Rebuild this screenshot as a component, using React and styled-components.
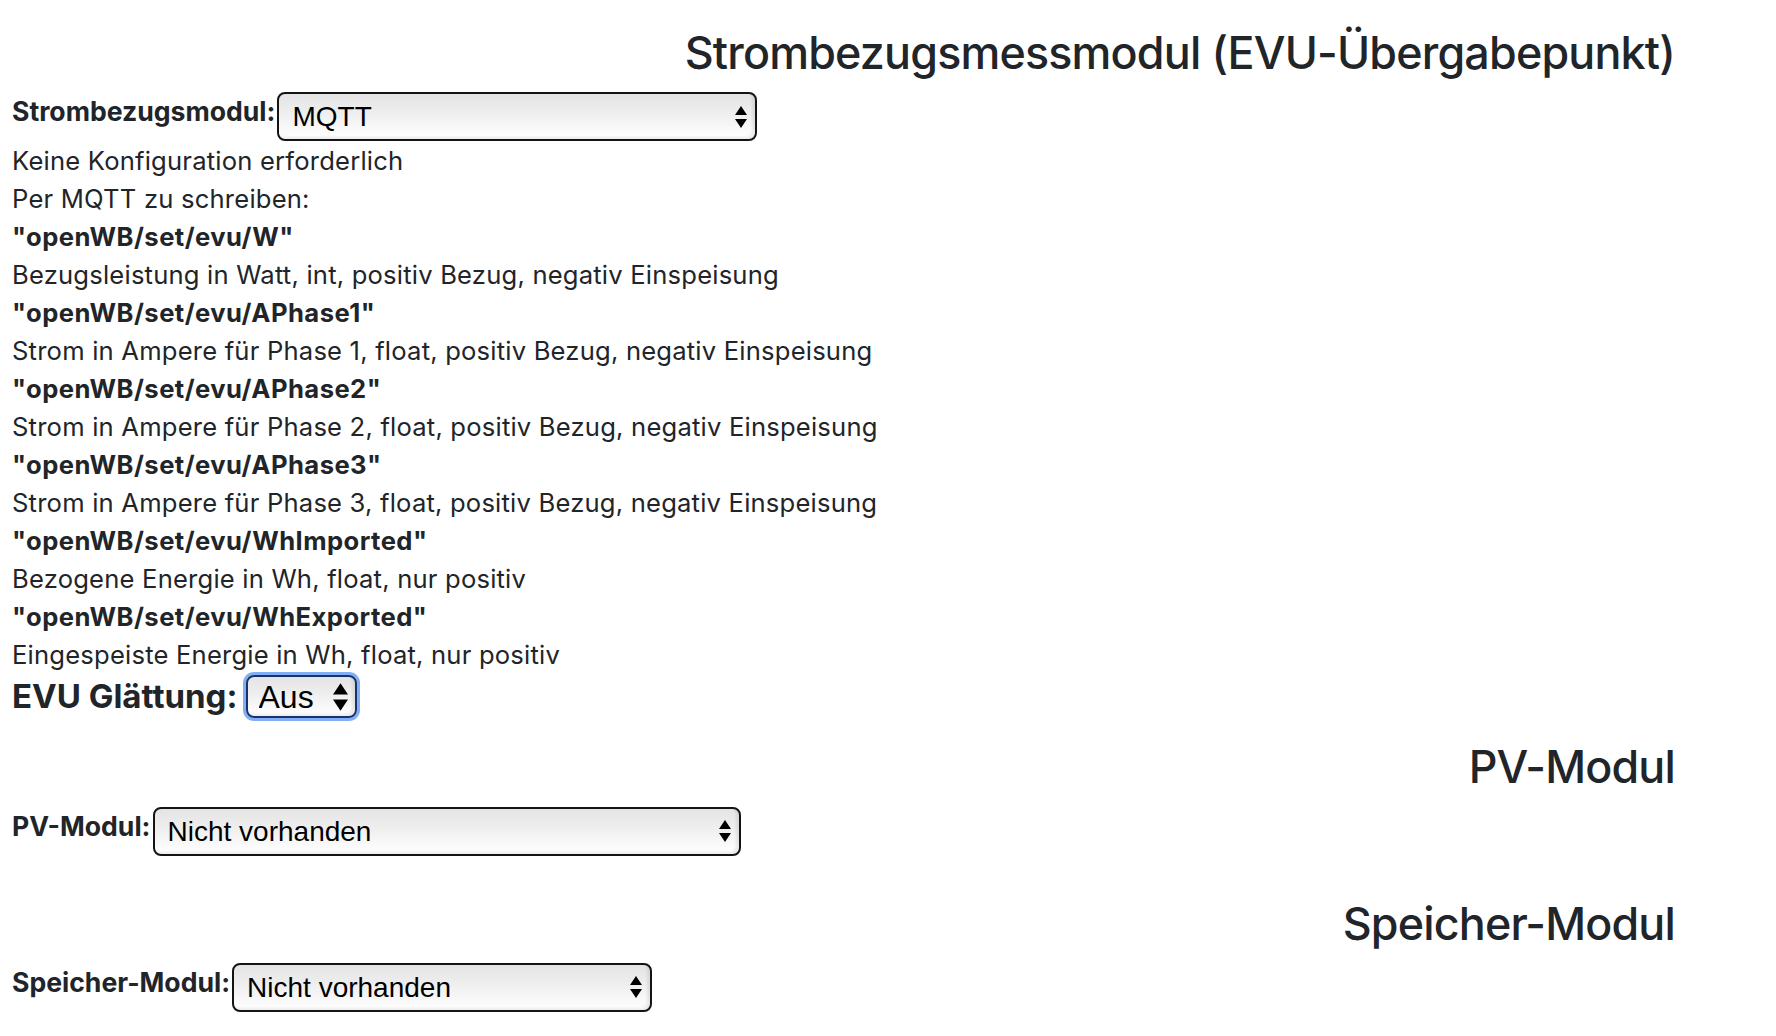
import styled, { createGlobalStyle } from 'styled-components';

const GlobalStyle = createGlobalStyle`
  html, body {
    margin: 0;
    padding: 0;
    background: #fff;
  }
  body {
    font-family: 'Inter', 'Helvetica Neue', Arial, sans-serif;
    color: #212529;
  }
`;

const topics = [
  ['"openWB/set/evu/W"', 'Bezugsleistung in Watt, int, positiv Bezug, negativ Einspeisung'],
  ['"openWB/set/evu/APhase1"', 'Strom in Ampere für Phase 1, float, positiv Bezug, negativ Einspeisung'],
  ['"openWB/set/evu/APhase2"', 'Strom in Ampere für Phase 2, float, positiv Bezug, negativ Einspeisung'],
  ['"openWB/set/evu/APhase3"', 'Strom in Ampere für Phase 3, float, positiv Bezug, negativ Einspeisung'],
  ['"openWB/set/evu/WhImported"', 'Bezogene Energie in Wh, float, nur positiv'],
  ['"openWB/set/evu/WhExported"', 'Eingespeiste Energie in Wh, float, nur positiv'],
];

const Arrows = ({ big }) => (
  <ArrowIcon $big={big} viewBox='0 0 12 22' aria-hidden='true'>
    <polygon points='0,9 6,0 12,9' />
    <polygon points='0,13 12,13 6,22' />
  </ArrowIcon>
);

const Dropdown = ({ value, options, width, big, focused }) => (
  <SelectWrap>
    <Select defaultValue={value} $width={width} $big={big} $focused={focused}>
      {options.map((o) => (
        <option key={o}>{o}</option>
      ))}
    </Select>
    <Arrows big={big} />
  </SelectWrap>
);

const App = () => {
  return (
    <Page>
      <GlobalStyle />
      <Section>
        <Heading>Strombezugsmessmodul (EVU-Übergabepunkt)</Heading>
        <FieldRow>
          <Label>Strombezugsmodul:</Label>
          <Dropdown value='MQTT' options={['MQTT', 'Nicht vorhanden']} width={480} />
        </FieldRow>
        <Info>
          <Line>Keine Konfiguration erforderlich</Line>
          <Line>Per MQTT zu schreiben:</Line>
          {topics.map(([topic, desc]) => (
            <div key={topic}>
              <Line $bold>{topic}</Line>
              <Line>{desc}</Line>
            </div>
          ))}
        </Info>
        <SmoothRow>
          <BigLabel>EVU Glättung:</BigLabel>
          <Dropdown value='Aus' options={['Aus', 'An']} big focused />
        </SmoothRow>
      </Section>

      <Section $after={41}>
        <Heading>PV-Modul</Heading>
        <FieldRow>
          <Label>PV-Modul:</Label>
          <Dropdown value='Nicht vorhanden' options={['Nicht vorhanden', 'MQTT']} width={588} />
        </FieldRow>
      </Section>

      <Section>
        <Heading>Speicher-Modul</Heading>
        <FieldRow>
          <Label>Speicher-Modul:</Label>
          <Dropdown value='Nicht vorhanden' options={['Nicht vorhanden', 'MQTT']} width={420} />
        </FieldRow>
      </Section>
    </Page>
  );
};

const Page = styled.main`
  width: 1776px;
  box-sizing: border-box;
  padding: 27px 101px 0 12px;
  min-height: 1036px;
`;

const Section = styled.section`
  display: flex;
  flex-direction: column;
  align-items: stretch;
  margin-bottom: ${({ $after }) => ($after ? `${$after}px` : '0')};
`;

const Heading = styled.h3`
  margin: 0 0 11.5px;
  font-size: 44.8px;
  font-weight: 500;
  line-height: 1.2;
  text-align: right;
  letter-spacing: -0.8px;
`;

const FieldRow = styled.div`
  display: flex;
  align-items: flex-start;
  gap: 2px;
  padding-bottom: 1px;
`;

const Label = styled.label`
  font-size: 26.6px;
  font-weight: 700;
  line-height: 38px;
`;

const Info = styled.div`
  font-size: 25.6px;
  line-height: 38px;
`;

const Line = styled.div`
  font-weight: ${({ $bold }) => ($bold ? 700 : 400)};
  letter-spacing: ${({ $bold }) => ($bold ? '0.45px' : '0.2px')};
`;

const SmoothRow = styled.div`
  display: flex;
  align-items: center;
  gap: 8px;
  margin: 1px 0 23px;
`;

const BigLabel = styled.label`
  font-size: 33px;
  font-weight: 700;
  line-height: 1.2;
`;

const SelectWrap = styled.div`
  position: relative;
  display: inline-flex;
`;

const Select = styled.select`
  appearance: none;
  -webkit-appearance: none;
  box-sizing: border-box;
  width: ${({ $width, $big }) => ($width ? `${$width}px` : $big ? '111px' : 'auto')};
  height: ${({ $big }) => ($big ? '43px' : '49px')};
  padding: ${({ $big }) => ($big ? '0 30px 0 11px' : '0 30px 0 13px')};
  font-family: 'Liberation Sans', Arial, sans-serif;
  font-size: ${({ $big }) => ($big ? '32px' : '28px')};
  color: #000;
  border: ${({ $focused }) => ($focused ? '2px solid #17336f' : '2px solid #141414')};
  border-radius: 8px;
  background: linear-gradient(to bottom, #e4e4e4 0%, #efefef 45%, #fbfbfb 85%, #ffffff 100%);
  box-shadow: ${({ $focused }) =>
    $focused
      ? '0 0 0 3px #82aef5, inset -3px -2px 3px rgba(0, 0, 0, 0.08)'
      : 'inset -3px -2px 3px rgba(0, 0, 0, 0.08)'};
  outline: none;
`;

const ArrowIcon = styled.svg`
  position: absolute;
  top: 50%;
  right: ${({ $big }) => ($big ? '9px' : '10px')};
  width: ${({ $big }) => ($big ? '15px' : '12px')};
  height: ${({ $big }) => ($big ? '29px' : '22px')};
  transform: translateY(-50%);
  fill: #000;
  pointer-events: none;
`;

export default App;
